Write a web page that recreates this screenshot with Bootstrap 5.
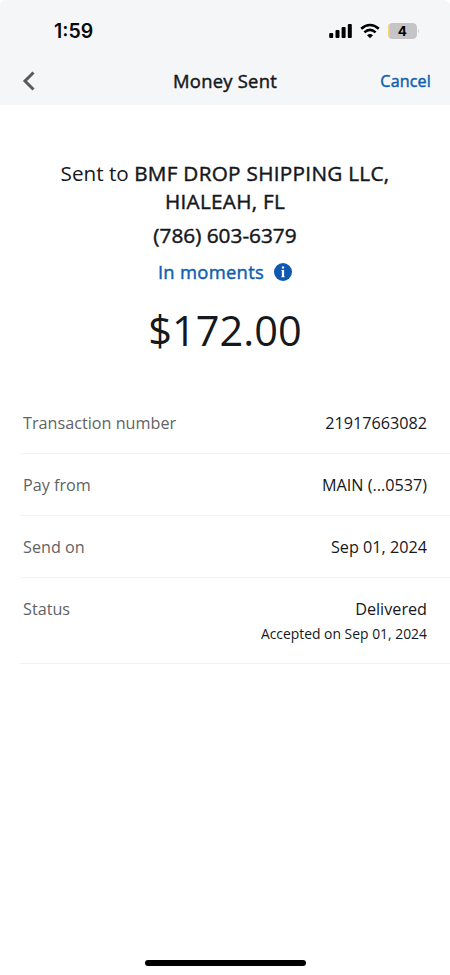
<!DOCTYPE html>
<html lang="en">
<head>
<meta charset="utf-8">
<meta name="viewport" content="width=device-width, initial-scale=1">
<title>Money Sent</title>
<link href="https://cdn.jsdelivr.net/npm/bootstrap@5.3.0/dist/css/bootstrap.min.css" rel="stylesheet">
<style>
  body { font-family: "Open Sans", "Noto Sans", sans-serif; color: #15181c; background: #fff; }
  .screen { height: 975px; overflow: hidden; }
  .top-area { height: 105px; background: #f5f6f8; border-radius: 6px 6px 0 0; }
  .status-bar { height: 61px; padding: 0 30px 0 54px; }
  .clock { font: 600 19.5px/24px Inter, sans-serif; color: #0a0a0a; }
  .title-bar { height: 39px; padding: 0 19px; }
  .title-text { font-size: 18.4px; line-height: 24px; letter-spacing: .25px; }
  .blue { color: #0f5fae; }
  .cancel { font-size: 16.1px; line-height: 24px; letter-spacing: .15px; padding-top: 1px; }
  .side { flex: 1 1 0; }
  .back { margin-left: 3px; }
  .summary { padding-top: 54px; }
  .payee { font-size: 20.7px; line-height: 28px; }
  /* medium weight: regular outlines thickened slightly */
  .semi { -webkit-text-stroke: .45px currentColor; }
  .payee .semi { letter-spacing: .3px; }
  .phone { font-size: 20.8px; line-height: 28px; margin-top: 6px; }
  .timing { font-size: 18.4px; line-height: 26px; margin-top: 10px; letter-spacing: .3px; gap: 10px; }
  .amount { font-size: 41.5px; line-height: 56px; margin-top: 17px; }
  .details { margin: 34px 0 0 20px; font-size: 16.2px; line-height: 24px; }
  .detail { height: 62px; padding: 19px 23px 0 3px; border-bottom: 1px solid #f1f2f3; }
  .detail-tall { height: 86px; }
  .key { color: #626364; }
  .note { font-size: 13.9px; line-height: 20px; margin-top: 3px; }
  .home-bar { width: 161px; height: 6px; margin-bottom: 9px; background: #000; }
</style>
</head>
<body>
<div class="screen d-flex flex-column">
  <header class="top-area">
    <div class="status-bar d-flex align-items-center justify-content-between">
      <span class="clock">1:59</span>
      <svg width="92" height="18" viewBox="0 0 92 18" aria-hidden="true">
        <rect x="1.200" y="11" width="4" height="5" rx="1"/>
        <rect x="7.500" y="8" width="4" height="8" rx="1"/>
        <rect x="13.600" y="5" width="4" height="11" rx="1"/>
        <rect x="19.800" y="2" width="4" height="14" rx="1"/>
        <g fill="none" stroke="#000" stroke-width="2.600">
          <path d="M33.200 6.800Q42 -.800 50.800 6.800"/>
          <path d="M36.400 10.400Q42 5.300 47.600 10.400"/>
        </g>
        <path d="M39 13.200Q42 10.600 45 13.200L42 16.200Z"/>
        <clipPath id="cell"><rect x="60" y="1" width="29" height="16" rx="4.500"/></clipPath>
        <g clip-path="url(#cell)">
          <rect x="60" y="1" width="29" height="16" fill="#c5c5c7"/>
          <rect x="60" y="1" width="1.800" height="16" fill="#efd478"/>
        </g>
        <path d="M90 6.500q1.800 2.500 0 5z" fill="#c5c5c7"/>
        <text x="74.300" y="14" text-anchor="middle" font-family="Inter, sans-serif" font-size="13.500" font-weight="700">4</text>
      </svg>
    </div>
    <div class="title-bar d-flex align-items-center">
      <div class="side d-flex">
        <svg class="back" width="14" height="20" viewBox="0 0 14 20" aria-label="Back"><path d="M11.500 1.500L3 10l8.500 8.500" fill="none" stroke="#5a5a5a" stroke-width="3"/></svg>
      </div>
      <div class="title-text semi">Money Sent</div>
      <div class="side text-end cancel semi blue">Cancel</div>
    </div>
  </header>
  <main class="flex-grow-1">
    <section class="summary text-center">
      <div class="payee">Sent to <span class="semi">BMF DROP SHIPPING LLC,<br>HIALEAH, FL</span></div>
      <div class="phone semi">(786) 603-6379</div>
      <div class="timing blue d-flex align-items-center justify-content-center"><span class="semi">In moments</span>
        <svg width="18" height="18" viewBox="0 0 18 18"><circle cx="9" cy="9" r="9" fill="#0f5ab0"/><path d="M7.400 7h2.700v6.300h.5v1H7.400v-1h.5V8h-.5zM7.900 3.400h2.200v2.200H7.900z" fill="#fff"/></svg>
      </div>
      <div class="amount">$172.00</div>
    </section>
    <section class="details">
      <div class="detail d-flex justify-content-between"><span class="key">Transaction number</span><span>21917663082</span></div>
      <div class="detail d-flex justify-content-between"><span class="key">Pay from</span><span>MAIN (...0537)</span></div>
      <div class="detail d-flex justify-content-between"><span class="key">Send on</span><span>Sep 01, 2024</span></div>
      <div class="detail detail-tall d-flex justify-content-between"><span class="key">Status</span><div class="text-end">Delivered<div class="note">Accepted on Sep 01, 2024</div></div></div>
    </section>
  </main>
  <div class="home-bar rounded-pill mx-auto"></div>
</div>
<script src="https://cdn.jsdelivr.net/npm/bootstrap@5.3.0/dist/js/bootstrap.bundle.min.js"></script>
</body>
</html>
